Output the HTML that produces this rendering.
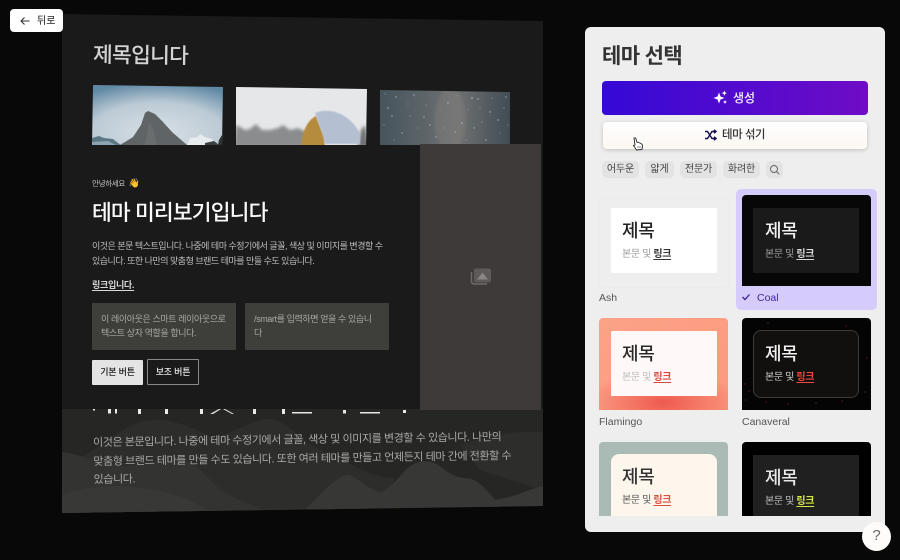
<!DOCTYPE html>
<html lang="ko"><head><meta charset="utf-8">
<style>
*{box-sizing:border-box;margin:0;padding:0}
html,body{width:900px;height:560px;overflow:hidden;background:#080808;font-family:"Liberation Sans","Noto Sans CJK KR",sans-serif}
.a{position:absolute;white-space:nowrap}
.chip{position:absolute;top:161px;height:17px;background:#e3e3e3;border-radius:5px;font-size:10px;line-height:17px;text-align:center;color:#444;letter-spacing:-.1px}
.thumb{position:absolute;overflow:hidden}
.inner{position:absolute;left:12px;width:106px}
.t{position:absolute;left:11px;top:11px;font-size:18px;line-height:25px;white-space:nowrap;letter-spacing:-.3px;font-weight:500}
.b{position:absolute;left:11px;top:39px;font-size:10px;line-height:15px;white-space:nowrap;letter-spacing:-.35px}
.b u{font-weight:700;text-underline-offset:2px}
.n{position:absolute;font-size:10.5px;line-height:14px;color:#444}
</style></head><body>

<svg class="a" style="left:0;top:0" width="900" height="560" viewBox="0 0 900 560">
<defs>
<radialGradient id="sky" cx=".5" cy=".8" r=".85"><stop offset="0" stop-color="#d9e0e5"/><stop offset=".6" stop-color="#bccad5"/><stop offset="1" stop-color="#5f88a4"/></radialGradient>
<linearGradient id="star" x1="0" y1="0" x2="1" y2="0"><stop offset="0" stop-color="#46545c"/><stop offset=".6" stop-color="#6f7172"/><stop offset="1" stop-color="#414c54"/></linearGradient>
<clipPath id="c2"><polygon points="236,87 367,89 366,145 236,145"/></clipPath>
<clipPath id="c3"><polygon points="380,90 510,92 510,145 380,145"/></clipPath>
<clipPath id="cb"><polygon points="62,409 543,409 543,506 62,513"/></clipPath>
<filter id="bl"><feGaussianBlur stdDeviation="1.500"/></filter>
<filter id="bm"><feGaussianBlur stdDeviation=".6"/></filter>
</defs>
<polygon points="62,14 543,21 543,506 62,513" fill="#1a1a1a"/>
<!-- image 1 -->
<polygon points="93,85 223,87 222,145 92,145" fill="url(#sky)"/>
<path d="M120,145 L133,137 L141,125 L145,113 L148,111 L155,114 L163,122 L172,132 L180,139 L187,145Z" fill="#5f6466"/>
<path d="M145,145 L149,122 L153,128 L157,145Z" fill="#6d7172" opacity=".7"/>
<path d="M187,145 L190,138 L198,137 L200,134 L205,137 L212,139 L216,144 L222,145Z" fill="#e6ebee"/>
<path d="M205,143 L214,141 L219,145 L205,145Z" fill="#3a3f41"/>
<path d="M219,140 L222,135 L222,145 L218,145Z" fill="#2c3133"/>
<path d="M92,145 L92,138 L99,136 L104,138 L113,139 L118,143 L121,145Z" fill="#5b7786"/>
<path d="M92,142 L108,141 L116,145 L92,145Z" fill="#8ea4b2"/>
<!-- image 2 -->
<polygon points="236,87 367,89 366,145 236,145" fill="#e6e7e9"/>
<g clip-path="url(#c2)">
<path d="M234,147 L236,125 L240,127 L245,130 L250,129 L256,124 L262,130 L270,130 L278,128 L283,125 L290,130 L298,128 L306,132 L306,147Z" fill="#8a8c8d" filter="url(#bl)"/>
<path d="M358,147 L361,130 L365,125 L369,147Z" fill="#6f7172" filter="url(#bl)"/>
<path d="M301,147 C302,130 308,120 316,116 L324,137 L325,147Z" fill="#b58c3d" filter="url(#bm)"/>
<path d="M315,113 C332,106 352,116 360,134 L360,144 L325,144 L323,135 Z" fill="#b4c0d2" filter="url(#bm)"/>
</g>
<!-- image 3 -->
<polygon points="380,90 510,92 510,145 380,145" fill="url(#star)"/>
<g clip-path="url(#c3)" fill="#a8bccd" opacity=".85">
<ellipse cx="450" cy="120" rx="16" ry="32" fill="#8a8580" opacity=".4" filter="url(#bl)"/>
<circle cx="388" cy="108" r=".8"/><circle cx="392" cy="116" r=".8"/><circle cx="424" cy="117" r=".8"/><circle cx="448" cy="103" r=".8"/><circle cx="472" cy="98" r=".9"/><circle cx="478" cy="99" r=".8"/><circle cx="498" cy="120" r=".8"/><circle cx="486" cy="140" r=".8"/><circle cx="462" cy="123" r=".8"/><circle cx="414" cy="95" r=".7"/><circle cx="402" cy="133" r=".7"/><circle cx="436" cy="137" r=".7"/><circle cx="506" cy="97" r=".7"/><circle cx="490" cy="112" r=".7"/><circle cx="396" cy="97" r=".7"/><circle cx="455" cy="132" r=".7"/><circle cx="474" cy="128" r=".7"/><circle cx="430" cy="125" r=".7"/>
<circle cx="384" cy="125" r=".5"/><circle cx="408" cy="104" r=".5"/><circle cx="418" cy="128" r=".5"/><circle cx="440" cy="110" r=".5"/><circle cx="458" cy="96" r=".5"/><circle cx="468" cy="110" r=".5"/><circle cx="482" cy="122" r=".5"/><circle cx="500" cy="133" r=".5"/><circle cx="504" cy="108" r=".5"/><circle cx="394" cy="140" r=".5"/><circle cx="410" cy="116" r=".5"/><circle cx="444" cy="128" r=".5"/><circle cx="480" cy="108" r=".5"/><circle cx="492" cy="98" r=".5"/><circle cx="426" cy="105" r=".5"/><circle cx="385" cy="94" r=".5"/><circle cx="466" cy="140" r=".5"/><circle cx="508" cy="125" r=".5"/>
</g>
<!-- bottom band -->
<polygon points="62,409 543,409 543,506 62,513" fill="#262625"/>
<g clip-path="url(#cb)">
<path d="M62,470 C90,455 125,422 150,420 C175,418 195,430 215,438 C235,432 250,420 270,419 C290,422 300,440 320,450 C350,462 370,478 395,478 L380,515 L62,515Z" fill="#2d2d2b"/>
<path d="M62,452 C85,455 100,465 125,466 C150,465 170,455 190,463 C205,470 215,490 235,498 C250,505 265,510 275,515 L62,515Z" fill="#333331"/>
<path d="M62,495 C100,480 150,485 190,500 L215,515 L62,515Z" fill="#383836"/>
<path d="M460,445 C490,435 520,430 543,432 L543,490 L480,470Z" fill="#2d2d2b"/>
<path d="M305,510 C320,495 335,477 347,475 C360,477 370,492 382,492 C395,485 405,468 412,465 C420,460 430,460 438,465 C448,472 455,478 465,478 C480,478 490,495 502,508Z" fill="#373735"/>
<path d="M490,500 C510,500 525,490 543,486 L543,510 L490,510Z" fill="#383836"/>
</g>
<!-- middle band -->
<rect x="62" y="145" width="358" height="264" fill="#1a1a1a"/>
<rect x="420" y="144" width="121" height="266" fill="#3f3a3a"/>
<rect x="474" y="268.500" width="17" height="14" rx="2" fill="#5e5a5a"/>
<path d="M477,279.500 L482.500,272.500 L488,279.500Z" fill="#8a8686"/>
<path d="M471.500,272 V281 Q471.500,284 474.500,284 H487" fill="none" stroke="#6e6a6a" stroke-width="1.500"/>
</svg>

<div class="a" style="left:93px;top:39px;font-size:21.500px;line-height:32px;color:#d4d4d4;font-weight:500;letter-spacing:-.75px;transform:rotate(.8deg);transform-origin:0 50%">제목입니다</div>

<div class="a" style="left:92px;top:177px;font-size:7.500px;line-height:12px;color:#c4c4c4;letter-spacing:-.3px">안녕하세요 <span style="color:#e0b040;font-size:9px;margin-left:2px">👋</span></div>
<div class="a" style="left:92px;top:198px;font-size:21.500px;line-height:30px;color:#fafafa;font-weight:500;letter-spacing:-.85px">테마 미리보기입니다</div>
<div class="a" style="left:92px;top:239px;font-size:9px;line-height:15px;color:#bdbdbd;letter-spacing:-.5px">이것은 본문 텍스트입니다. 나중에 테마 수정기에서 글꼴, 색상 및 이미지를 변경할 수<br>있습니다. 또한 나만의 맞춤형 브랜드 테마를 만들 수도 있습니다.</div>
<div class="a" style="left:92px;top:278px;font-size:9px;line-height:14px;color:#d8d8d8;font-weight:700;text-decoration:underline;text-underline-offset:2px;letter-spacing:-.3px">링크입니다.</div>
<div class="a" style="left:92px;top:303px;width:144px;height:47px;background:#3e3e3a;border-radius:1px;padding:10px 9px;font-size:9px;line-height:13.500px;color:#a8a8a4;letter-spacing:-.4px">이 레이아웃은 스마트 레이아웃으로<br>텍스트 상자 역할을 합니다.</div>
<div class="a" style="left:245px;top:303px;width:144px;height:47px;background:#3e3e3a;border-radius:1px;padding:10px 9px;font-size:9px;line-height:13.500px;color:#a8a8a4;letter-spacing:-.4px">/smart를 입력하면 얻을 수 있습니<br>다</div>
<div class="a" style="left:92px;top:360px;width:51px;height:25px;background:#e4e4e4;font-size:9px;line-height:25px;text-align:center;color:#1a1a1a;font-weight:500;border-radius:1px;letter-spacing:-.2px">기본 버튼</div>
<div class="a" style="left:147px;top:359px;width:52px;height:26px;border:1px solid #8a8a8a;font-size:9px;line-height:24px;text-align:center;color:#e8e8e8;font-weight:500;border-radius:1px;letter-spacing:-.2px">보조 버튼</div>

<!-- cropped big heading strip -->
<svg class="a" style="left:0;top:409px" width="450" height="6" viewBox="0 0 450 6" fill="#e8e8e8">
<rect x="93" y="0" width="2" height="1.500"/><rect x="108" y="0" width="3" height="4.500"/><rect x="115" y="0" width="2" height="4.500"/><rect x="138" y="0" width="3" height="5"/><rect x="165" y="0" width="3" height="5"/><rect x="200" y="0" width="3" height="5"/><path d="M210,5 L219,0 L221,0 L213,5Z"/><path d="M232,5 L223,0 L225,0 L234,5Z"/><rect x="253" y="0" width="3" height="5"/><rect x="282" y="0" width="3" height="5"/><rect x="292" y="3" width="20" height="1.500"/><rect x="343" y="1" width="3" height="3.500"/><rect x="360" y="3" width="20" height="1.500"/><rect x="403" y="1" width="3" height="3"/>
</svg>

<div class="a" style="left:93px;top:434px;font-size:11px;line-height:18.500px;color:#a9a9a6;letter-spacing:-.42px;transform:rotate(-.8deg);transform-origin:0 0">이것은 본문입니다. 나중에 테마 수정기에서 글꼴, 색상 및 이미지를 변경할 수 있습니다. 나만의<br>맞춤형 브랜드 테마를 만들 수도 있습니다. 또한 여러 테마를 만들고 언제든지 테마 간에 전환할 수<br>있습니다.</div>

<!-- back button -->
<div class="a" style="left:10px;top:9px;width:53px;height:23px;background:#fff;border-radius:4px"></div>
<svg class="a" style="left:19px;top:15px" width="12" height="12" viewBox="0 0 12 12" fill="none" stroke="#333" stroke-width="1.100"><path d="M10.500,6 H2 M5.500,2.500 L2,6 L5.500,9.500"/></svg>
<div class="a" style="left:37px;top:13.500px;font-size:10px;line-height:15px;color:#444;font-weight:500">뒤로</div>

<!-- panel -->
<div class="a" style="left:585px;top:27px;width:300px;height:505px;background:#eeeeee;border-radius:6px"></div>
<div class="a" style="left:602px;top:42px;font-size:21px;line-height:30px;font-weight:700;color:#333;letter-spacing:-.6px">테마 선택</div>

<div class="a" style="left:602px;top:81px;width:266px;height:34px;border-radius:4px;background:linear-gradient(90deg,#3409d6,#6f0cc6)"></div>
<svg class="a" style="left:713px;top:90px" width="15" height="15" viewBox="0 0 15 15" fill="#fff"><path d="M6,2.500 L7.500,6.500 L11.500,8 L7.500,9.500 L6,13.500 L4.500,9.500 L.5,8 L4.500,6.500Z"/><path d="M11.500,.5 L12.300,2.700 L14.500,3.500 L12.300,4.300 L11.500,6.500 L10.700,4.300 L8.500,3.500 L10.700,2.700Z" transform="translate(1,0) scale(.9)"/><path d="M12,10 L12.600,11.400 L14,12 L12.600,12.600 L12,14 L11.400,12.600 L10,12 L11.400,11.400Z"/></svg>
<div class="a" style="left:733px;top:90px;font-size:12px;line-height:17px;color:#f4f0ff;font-weight:500">생성</div>

<div class="a" style="left:603px;top:122px;width:264px;height:27px;border-radius:4px;background:linear-gradient(180deg,#fff,#fcf8f2);box-shadow:0 1px 4px rgba(0,0,0,.2)"></div>
<svg class="a" style="left:704px;top:129px" width="13" height="12" viewBox="0 0 13 12" fill="none" stroke="#15104e" stroke-width="1.400"><path d="M1,2.500 H3.500 L8,9.500 H11.500 M1,9.500 H3.500 L8,2.500 H11.500 M10,.8 L12,2.500 L10,4.200 M10,7.800 L12,9.500 L10,11.200"/></svg>
<div class="a" style="left:722px;top:127px;font-size:11.500px;line-height:16px;color:#333;font-weight:500;letter-spacing:-.5px">테마 섞기</div>
<svg class="a" style="left:632px;top:137px" width="12" height="15" viewBox="0 0 12 15"><path d="M2,1 Q3.500,.3 4,2 L4.800,5 L8,6 Q10.500,7 10.500,9 L10,12.500 L4.500,13 L1.500,8.500 L3,8 Z" fill="#fff" stroke="#222" stroke-width=".9"/><path d="M6,9 V11 M8,9 V11" stroke="#555" stroke-width=".7"/></svg>

<div class="chip" style="left:602px;width:37px">어두운</div>
<div class="chip" style="left:645px;width:29px">얇게</div>
<div class="chip" style="left:680px;width:37px">전문가</div>
<div class="chip" style="left:723px;width:37px">화려한</div>
<div class="chip" style="left:766px;width:17px"></div>
<svg class="a" style="left:769px;top:164px" width="11" height="11" viewBox="0 0 11 11" fill="none" stroke="#666" stroke-width="1"><circle cx="5" cy="5" r="3.500"/><path d="M7.600,7.600 L10.300,10.300"/></svg>

<!-- Ash -->
<div class="thumb" style="left:599px;top:198px;width:130px;height:90px;background:#eee;border:1px solid #ebebeb;border-radius:4px"></div>
<div class="thumb" style="left:599px;top:198px;width:130px;height:90px">
  <div class="inner" style="top:10px;height:65px;background:#fff;border-radius:1px"><div class="t" style="color:#222">제목</div><div class="b" style="color:#999">본문 및 <u style="color:#333">링크</u></div></div>
</div>
<div class="n" style="left:599px;top:291px;color:#555">Ash</div>

<!-- Coal -->
<div class="a" style="left:736px;top:189px;width:141px;height:121px;background:#d6ccfb;border-radius:5px"></div>
<div class="thumb" style="left:742px;top:195px;width:129px;height:91px;background:#070707;border-radius:4px 4px 0 0">
  <div class="inner" style="left:11px;top:13px;height:65px;background:#1a1a1a"><div class="t" style="left:12px;color:#f2f2f2">제목</div><div class="b" style="left:12px;color:#a0a0a0">본문 및 <u style="color:#d8d8d8">링크</u></div></div>
</div>
<svg class="a" style="left:741px;top:292px" width="10" height="10" viewBox="0 0 10 10" fill="none" stroke="#3a1f9c" stroke-width="1.300"><path d="M1.500,5 L4,7.500 L8.500,2.500"/></svg>
<div class="n" style="left:757px;top:291px;color:#3e28a0;font-weight:500">Coal</div>

<!-- Flamingo -->
<div class="thumb" style="left:599px;top:318px;width:129px;height:92px;border-radius:4px 4px 0 0;background:radial-gradient(ellipse 60% 35% at 50% 92%,#ee5a50,rgba(238,90,80,0)),linear-gradient(135deg,#fca287,#fb9a7e)">
  <div class="inner" style="top:13px;height:65px;background:#fef9f8;border-radius:1px"><div class="t" style="color:#2a2a2a">제목</div><div class="b" style="color:#bbb">본문 및 <u style="color:#d9483c">링크</u></div></div>
</div>
<div class="n" style="left:599px;top:415px;color:#555">Flamingo</div>

<!-- Canaveral -->
<div class="thumb" style="left:742px;top:318px;width:129px;height:92px;background:#040404;border-radius:4px 4px 0 0">
  <svg style="position:absolute;left:0;top:0" width="129" height="92" fill="#7a2a24"><circle cx="3" cy="66" r=".6"/><circle cx="7" cy="73" r=".6"/><circle cx="4" cy="82" r=".6"/><circle cx="24" cy="84" r=".6"/><circle cx="46" cy="86" r=".6"/><circle cx="74" cy="85" r=".6"/><circle cx="100" cy="83" r=".6"/><circle cx="123" cy="74" r=".6"/><circle cx="125" cy="40" r=".6"/><circle cx="26" cy="5" r=".6"/><circle cx="104" cy="8" r=".6"/></svg>
  <div class="inner" style="left:11px;top:12px;height:68px;background:#120f0f;border:1px solid #3c3a3a;border-radius:8px"><div class="t" style="left:11px;top:11px;color:#f2f2f2">제목</div><div class="b" style="left:11px;top:39px;color:#d0d0d0">본문 및 <u style="color:#ee4a42">링크</u></div></div>
</div>
<div class="n" style="left:742px;top:415px;color:#555">Canaveral</div>

<!-- row 3 -->
<div class="thumb" style="left:599px;top:442px;width:129px;height:74px;background:#aabbb5;border-radius:4px 4px 0 0">
  <div class="inner" style="top:12px;height:70px;background:#fdf6ed;border-radius:8px 8px 0 0"><div class="t" style="color:#333">제목</div><div class="b" style="color:#555">본문 및 <u style="color:#d4503c">링크</u></div></div>
</div>
<div class="thumb" style="left:742px;top:442px;width:129px;height:74px;background:#000;border-radius:4px 4px 0 0">
  <div class="inner" style="left:11px;top:13px;height:70px;background:#202020"><div class="t" style="left:12px;color:#e8e8e8">제목</div><div class="b" style="left:12px;color:#c0c0c0">본문 및 <u style="color:#d8e84a">링크</u></div></div>
</div>

<!-- help -->
<div class="a" style="left:862px;top:522px;width:29px;height:29px;border-radius:50%;background:#fdfcfa;text-align:center;font-size:15px;line-height:28px;color:#666">?</div>
</body></html>
